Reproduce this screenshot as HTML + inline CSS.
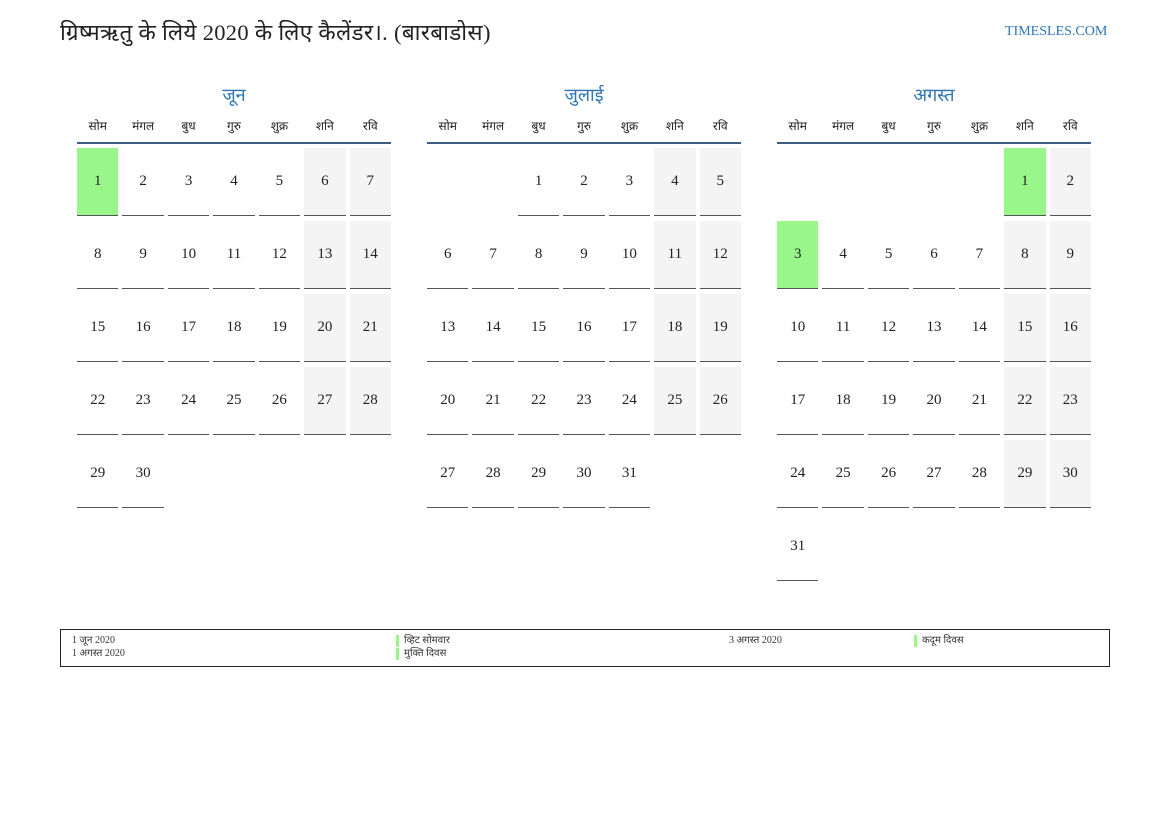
<!DOCTYPE html>
<html><head><meta charset="utf-8"><style>
body{margin:0;width:1169px;height:827px;background:#fff;font-family:"Liberation Serif",serif;color:#222;position:relative;overflow:hidden}
.title{position:absolute;left:60px;top:16px;font-size:22.5px;color:#222;letter-spacing:0.3px}
.site{position:absolute;left:1005px;top:24px;font-size:14px;color:#2e75b6}
.month{position:absolute;top:82px;width:314px}
.mt{text-align:center;color:#2e75b6;font-size:18px;height:26px;line-height:26px}
.dh{display:grid;grid-template-columns:repeat(7,1fr);column-gap:4px;font-size:12px;text-align:center;height:36px;line-height:36px;border-bottom:2px solid #3e5b82;box-sizing:border-box}
.g{display:grid;grid-template-columns:repeat(7,1fr);column-gap:4px;row-gap:5px;margin-top:4px}
.g div{height:68px;line-height:66px;text-align:center;font-size:15px;box-sizing:border-box;border-bottom:1.5px solid #555}
.g div.e{border:none}
.g div.w{background:#f4f4f4}
.g div.h{background:#99f78a}
.leg{position:absolute;left:60px;top:629px;width:1050px;height:38px;border:1px solid #222;box-sizing:border-box;font-size:10px;color:#333}
.leg span{position:absolute;line-height:12px}
.bar{border-left:3px solid #99f78a;padding-left:5px}
</style></head><body>
<div class="title">ग्रिष्मऋतु के लिये 2020 के लिए कैलेंडर।. (बारबाडोस)</div>
<div class="site">TIMESLES.COM</div>

<div class="month" style="left:77px">
<div class="mt">जून</div>
<div class="dh"><span>सोम</span><span>मंगल</span><span>बुध</span><span>गुरु</span><span>शुक्र</span><span>शनि</span><span>रवि</span></div>
<div class="g">
<div class="h">1</div><div>2</div><div>3</div><div>4</div><div>5</div><div class="w">6</div><div class="w">7</div>
<div>8</div><div>9</div><div>10</div><div>11</div><div>12</div><div class="w">13</div><div class="w">14</div>
<div>15</div><div>16</div><div>17</div><div>18</div><div>19</div><div class="w">20</div><div class="w">21</div>
<div>22</div><div>23</div><div>24</div><div>25</div><div>26</div><div class="w">27</div><div class="w">28</div>
<div>29</div><div>30</div>
</div></div>

<div class="month" style="left:427px">
<div class="mt">जुलाई</div>
<div class="dh"><span>सोम</span><span>मंगल</span><span>बुध</span><span>गुरु</span><span>शुक्र</span><span>शनि</span><span>रवि</span></div>
<div class="g">
<div class="e"></div><div class="e"></div><div>1</div><div>2</div><div>3</div><div class="w">4</div><div class="w">5</div>
<div>6</div><div>7</div><div>8</div><div>9</div><div>10</div><div class="w">11</div><div class="w">12</div>
<div>13</div><div>14</div><div>15</div><div>16</div><div>17</div><div class="w">18</div><div class="w">19</div>
<div>20</div><div>21</div><div>22</div><div>23</div><div>24</div><div class="w">25</div><div class="w">26</div>
<div>27</div><div>28</div><div>29</div><div>30</div><div>31</div>
</div></div>

<div class="month" style="left:777px">
<div class="mt">अगस्त</div>
<div class="dh"><span>सोम</span><span>मंगल</span><span>बुध</span><span>गुरु</span><span>शुक्र</span><span>शनि</span><span>रवि</span></div>
<div class="g">
<div class="e"></div><div class="e"></div><div class="e"></div><div class="e"></div><div class="e"></div><div class="h">1</div><div class="w">2</div>
<div class="h">3</div><div>4</div><div>5</div><div>6</div><div>7</div><div class="w">8</div><div class="w">9</div>
<div>10</div><div>11</div><div>12</div><div>13</div><div>14</div><div class="w">15</div><div class="w">16</div>
<div>17</div><div>18</div><div>19</div><div>20</div><div>21</div><div class="w">22</div><div class="w">23</div>
<div>24</div><div>25</div><div>26</div><div>27</div><div>28</div><div class="w">29</div><div class="w">30</div>
<div>31</div>
</div></div>

<div class="leg">
<span style="left:11px;top:5px">1 जून 2020</span>
<span class="bar" style="left:335px;top:5px">व्हिट सोमवार</span>
<span style="left:668px;top:5px">3 अगस्त 2020</span>
<span class="bar" style="left:853px;top:5px">कदूम दिवस</span>
<span style="left:11px;top:18px">1 अगस्त 2020</span>
<span class="bar" style="left:335px;top:18px">मुक्ति दिवस</span>
</div>
</body></html>
